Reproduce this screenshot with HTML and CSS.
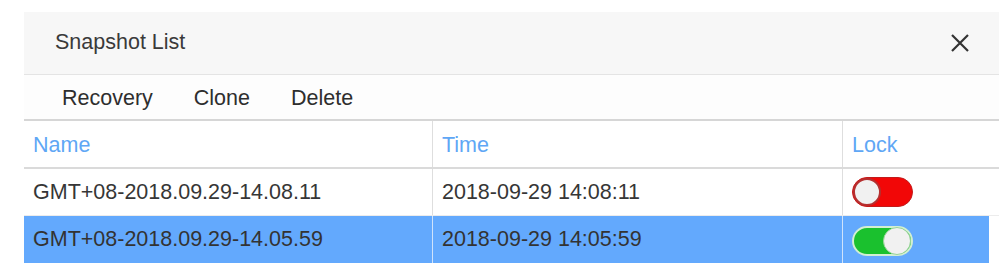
FILE: index.html
```html
<!DOCTYPE html>
<html>
<head>
<meta charset="utf-8">
<link rel="stylesheet" href="styles.css">
</head>
<body>
<div class="dialog">
  <div class="header">
    <span class="title">Snapshot List</span>
    <svg class="close" width="20" height="20" viewBox="0 0 20 20"><path d="M2 2 L18 18 M18 2 L2 18" stroke="#333" stroke-width="2.2" fill="none"/></svg>
  </div>
  <div class="toolbar">
    <span class="tool">Recovery</span>
    <span class="tool">Clone</span>
    <span class="tool">Delete</span>
  </div>
  <div class="table">
    <div class="row head">
      <div class="cell c1">Name</div>
      <div class="cell c2">Time</div>
      <div class="cell c3">Lock</div>
      <div class="cell c4"></div>
    </div>
    <div class="row">
      <div class="cell c1">GMT+08-2018.09.29-14.08.11</div>
      <div class="cell c2">2018-09-29 14:08:11</div>
      <div class="cell c3"><span class="toggle off"><span class="knob"></span></span></div>
      <div class="cell c4"></div>
    </div>
    <div class="row selected">
      <div class="cell c1">GMT+08-2018.09.29-14.05.59</div>
      <div class="cell c2">2018-09-29 14:05:59</div>
      <div class="cell c3"><span class="toggle on"><span class="knob"></span></span></div>
      <div class="cell c4"></div>
    </div>
  </div>
</div>
</body>
</html>
```

FILE: styles.css
```css
html, body {
  margin: 0;
  padding: 0;
  background: #ffffff;
}
body {
  font-family: "Liberation Sans", Arial, sans-serif;
  font-size: 21.5px;
  color: #363636;
}
.dialog {
  margin: 12px 0 0 24px;
  width: 975px;
}
.header {
  height: 63px;
  background: #f7f7f7;
  border-bottom: 1px solid #e4e4e4;
  display: flex;
  align-items: center;
  justify-content: space-between;
  padding: 0 29px 0 31px;
  box-sizing: border-box;
}
.title {
  color: #3a3a3a;
  position: relative;
  top: -1px;
}
.close {
  display: block;
}
.toolbar {
  height: 44px;
  display: flex;
  align-items: center;
  gap: 41px;
  padding-left: 38px;
  background: #fdfdfd;
  border-bottom: 2px solid #d6d6d6;
}
.tool {
  color: #2e2e2e;
  position: relative;
  top: 1px;
}
.table {
  display: flex;
  flex-direction: column;
}
.row {
  display: grid;
  grid-template-columns: 409px 410px 146px 10px;
  height: 46px;
  border-bottom: 1px solid #ececec;
}
.row.head {
  height: 46px;
  border-bottom: 2px solid #dadada;
}
.row:last-child {
  border-bottom: none;
  height: 47px;
}
.cell {
  display: flex;
  align-items: center;
  padding-left: 9px;
  border-right: 1px solid #dedede;
  white-space: nowrap;
}
.cell.c3 {
  padding-left: 9px;
}
.cell.c4 {
  border-right: none;
  padding: 0;
}
.head .cell {
  color: #5fa7f5;
  padding-top: 2px;
}
.head .c3 {
  border-right: none;
}
.row .c3 {
  border-right: none;
}
.selected .c1,
.selected .c2,
.selected .c3 {
  background: #63a9fd;
  color: #333;
}
.selected .c1,
.selected .c2 {
  border-right-color: #cfe3fb;
}
.toggle {
  position: relative;
  display: block;
  width: 61px;
  height: 30px;
  border-radius: 15px;
  box-sizing: border-box;
}
.toggle.off {
  background: #f20707;
  border: 1px solid #c21b1b;
}
.toggle.on {
  background: #1ac12e;
  border: 2px solid #d2efd2;
  margin-top: 2px;
}
.knob {
  position: absolute;
  top: 0;
  width: 28px;
  height: 28px;
  border-radius: 50%;
  background: #f1f1f1;
  box-sizing: border-box;
}
.off .knob {
  left: 0;
  border: 2px solid #b53030;
}
.on .knob {
  right: 0;
  top: -1px;
  border: 1px solid #9ad39a;
}
```
